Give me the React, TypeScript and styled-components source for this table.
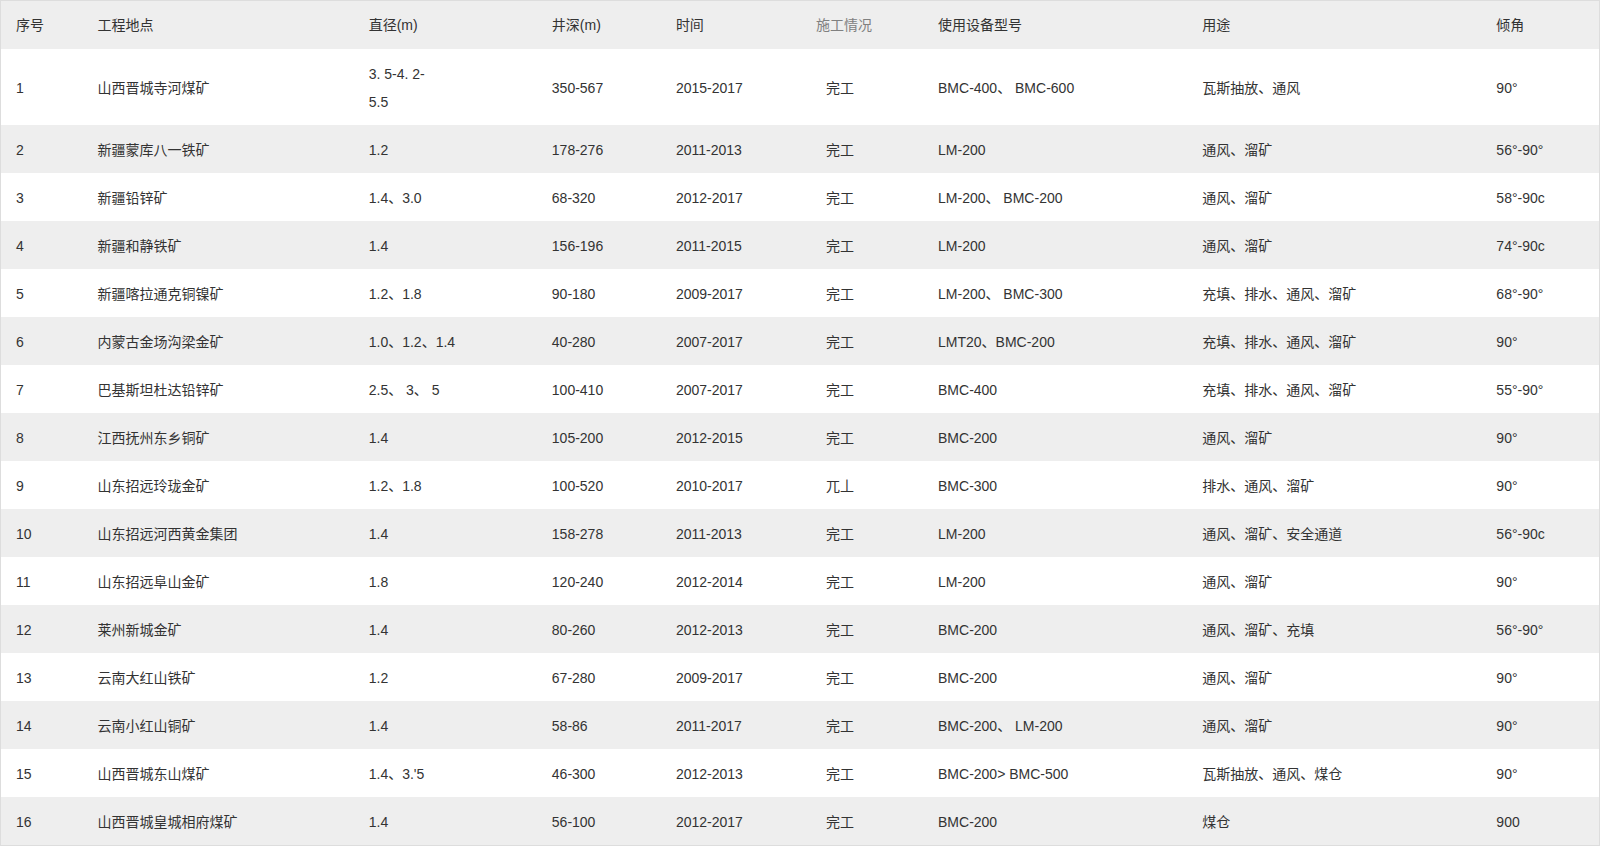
import React, { FC } from "react";
import styled, { createGlobalStyle } from "styled-components";

interface Project {
    no: string;
    site: string;
    diameter: React.ReactNode;
    depth: string;
    period: string;
    status: string;
    equipment: string;
    usage: string;
    angle: string;
}

const projects: Project[] = [
    { no: "1", site: "山西晋城寺河煤矿", diameter: <>3. 5-4. 2-<br />5.5</>, depth: "350-567", period: "2015-2017", status: "完工", equipment: "BMC-400、 BMC-600", usage: "瓦斯抽放、通风", angle: "90°" },
    { no: "2", site: "新疆蒙库八一铁矿", diameter: "1.2", depth: "178-276", period: "2011-2013", status: "完工", equipment: "LM-200", usage: "通风、溜矿", angle: "56°-90°" },
    { no: "3", site: "新疆铅锌矿", diameter: "1.4、3.0", depth: "68-320", period: "2012-2017", status: "完工", equipment: "LM-200、 BMC-200", usage: "通风、溜矿", angle: "58°-90c" },
    { no: "4", site: "新疆和静铁矿", diameter: "1.4", depth: "156-196", period: "2011-2015", status: "完工", equipment: "LM-200", usage: "通风、溜矿", angle: "74°-90c" },
    { no: "5", site: "新疆喀拉通克铜镍矿", diameter: "1.2、1.8", depth: "90-180", period: "2009-2017", status: "完工", equipment: "LM-200、 BMC-300", usage: "充填、排水、通风、溜矿", angle: "68°-90°" },
    { no: "6", site: "内蒙古金场沟梁金矿", diameter: "1.0、1.2、1.4", depth: "40-280", period: "2007-2017", status: "完工", equipment: "LMT20、BMC-200", usage: "充填、排水、通风、溜矿", angle: "90°" },
    { no: "7", site: "巴基斯坦杜达铅锌矿", diameter: "2.5、 3、 5", depth: "100-410", period: "2007-2017", status: "完工", equipment: "BMC-400", usage: "充填、排水、通风、溜矿", angle: "55°-90°" },
    { no: "8", site: "江西抚州东乡铜矿", diameter: "1.4", depth: "105-200", period: "2012-2015", status: "完工", equipment: "BMC-200", usage: "通风、溜矿", angle: "90°" },
    { no: "9", site: "山东招远玲珑金矿", diameter: "1.2、1.8", depth: "100-520", period: "2010-2017", status: "兀丄", equipment: "BMC-300", usage: "排水、通风、溜矿", angle: "90°" },
    { no: "10", site: "山东招远河西黄金集团", diameter: "1.4", depth: "158-278", period: "2011-2013", status: "完工", equipment: "LM-200", usage: "通风、溜矿、安全通道", angle: "56°-90c" },
    { no: "11", site: "山东招远阜山金矿", diameter: "1.8", depth: "120-240", period: "2012-2014", status: "完工", equipment: "LM-200", usage: "通风、溜矿", angle: "90°" },
    { no: "12", site: "莱州新城金矿", diameter: "1.4", depth: "80-260", period: "2012-2013", status: "完工", equipment: "BMC-200", usage: "通风、溜矿、充填", angle: "56°-90°" },
    { no: "13", site: "云南大红山铁矿", diameter: "1.2", depth: "67-280", period: "2009-2017", status: "完工", equipment: "BMC-200", usage: "通风、溜矿", angle: "90°" },
    { no: "14", site: "云南小红山铜矿", diameter: "1.4", depth: "58-86", period: "2011-2017", status: "完工", equipment: "BMC-200、 LM-200", usage: "通风、溜矿", angle: "90°" },
    { no: "15", site: "山西晋城东山煤矿", diameter: "1.4、3.'5", depth: "46-300", period: "2012-2013", status: "完工", equipment: "BMC-200> BMC-500", usage: "瓦斯抽放、通风、煤仓", angle: "90°" },
    { no: "16", site: "山西晋城皇城相府煤矿", diameter: "1.4", depth: "56-100", period: "2012-2017", status: "完工", equipment: "BMC-200", usage: "煤仓", angle: "900" },
];

const columnWidths = [82, 271, 183, 124, 140, 122, 264, 294, 118];

const App: FC = () => {
    return (
        <>
            <GlobalStyle />
            <Table>
                <colgroup>
                    {columnWidths.map((w, i) => (
                        <col key={i} style={{ width: w }} />
                    ))}
                </colgroup>
                <thead>
                    <HeadRow>
                        <HeadCell>序号</HeadCell>
                        <HeadCell>工程地点</HeadCell>
                        <HeadCell>直径(m)</HeadCell>
                        <HeadCell>井深(m)</HeadCell>
                        <HeadCell>时间</HeadCell>
                        <HeadCell muted>施工情况</HeadCell>
                        <HeadCell>使用设备型号</HeadCell>
                        <HeadCell>用途</HeadCell>
                        <HeadCell>倾角</HeadCell>
                    </HeadRow>
                </thead>
                <tbody>
                    {projects.map((p, i) => (
                        <Row key={p.no} striped={i % 2 === 1}>
                            <Cell>{p.no}</Cell>
                            <Cell>{p.site}</Cell>
                            <Cell>{p.diameter}</Cell>
                            <Cell>{p.depth}</Cell>
                            <Cell>{p.period}</Cell>
                            <Cell indent>{p.status}</Cell>
                            <Cell>{p.equipment}</Cell>
                            <Cell>{p.usage}</Cell>
                            <Cell>{p.angle}</Cell>
                        </Row>
                    ))}
                </tbody>
            </Table>
        </>
    );
};

export default App;

const GlobalStyle = createGlobalStyle`
    body {
        margin: 0;
        background: #fff;
        font-family: "Liberation Sans", "Noto Sans CJK SC", sans-serif;
        color: #333;
    }
`;

const Table = styled.table`
    width: 1600px;
    border-collapse: collapse;
    table-layout: fixed;
    border: 1px solid #ddd;
    font-size: 14px;
`;

const HeadRow = styled.tr`
    background: #eee;
`;

const HeadCell = styled.th<{ muted?: boolean }>`
    height: 48px;
    padding: 0 0 0 15px;
    text-align: left;
    font-weight: normal;
    line-height: 28px;
    color: ${(p) => (p.muted ? "#808080" : "#333")};
    vertical-align: middle;
`;

const Row = styled.tr<{ striped: boolean }>`
    background: ${(p) => (p.striped ? "#eee" : "#fff")};
`;

const Cell = styled.td<{ indent?: boolean }>`
    padding: 11px 0 9px ${(p) => (p.indent ? "25px" : "15px")};
    line-height: 28px;
    vertical-align: middle;
    white-space: nowrap;
`;
